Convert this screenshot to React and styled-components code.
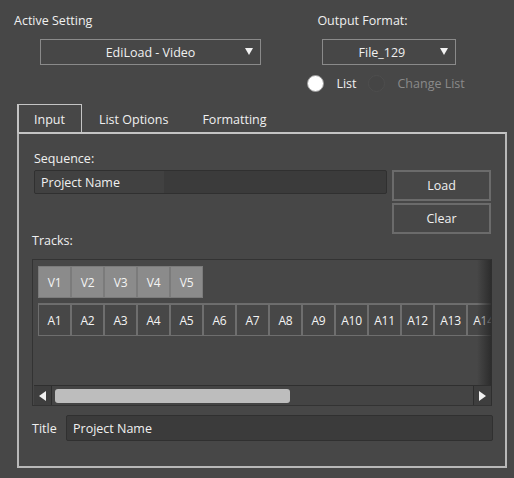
import React from "react";
import styled, { createGlobalStyle } from "styled-components";

const Global = createGlobalStyle`
  html, body { margin: 0; padding: 0; background: #474747; }
  body { font-family: "Open Sans", "Noto Sans", "Liberation Sans", sans-serif; }
  * { box-sizing: border-box; }
`;

const Window = styled.div`
  width: 514px;
  height: 478px;
  background: #474747;
  color: #f0f0f0;
  font-size: 12.5px;
  padding: 12px 7px 0 14px;
  display: flex;
  flex-direction: column;
`;

const Header = styled.div`
  display: flex;
  height: 92px;
`;

const Column = styled.div`
  display: flex;
  flex-direction: column;
  width: ${(p) => p.$width}px;
`;

const Label = styled.div`
  line-height: 18px;
  height: 18px;
  margin-left: ${(p) => p.$indent || 0}px;
`;

const Select = styled.div`
  position: relative;
  margin: 9px 0 0 ${(p) => p.$indent}px;
  width: ${(p) => p.$width}px;
  height: 26px;
  border: 1px solid #8a8a8a;
  display: flex;
  align-items: center;
  justify-content: center;
  padding-right: ${(p) => p.$shift || 0}px;
`;

const Caret = styled.span`
  position: absolute;
  right: 7px;
  top: 8px;
  width: 0;
  height: 0;
  border-left: 4.5px solid transparent;
  border-right: 4.5px solid transparent;
  border-top: 7px solid #f2f2f2;
`;

const RadioRow = styled.div`
  display: flex;
  align-items: center;
  margin: 8px 0 0 -10px;
  height: 20px;
`;

const Radio = styled.span`
  width: 17px;
  height: 17px;
  border-radius: 50%;
  margin-right: 12px;
  background: ${(p) => (p.$on ? "#ffffff" : "#454545")};
  border: 1px solid ${(p) => (p.$on ? "#9a9a9a" : "#4e4e4e")};
`;

const RadioText = styled.span`
  margin-right: 12px;
  color: ${(p) => (p.$muted ? "#8a8a8a" : "#f0f0f0")};
`;

const TabStrip = styled.div`
  display: flex;
  margin-left: 3px;
  height: 29px;
`;

const Tab = styled.div`
  padding: 0 16px 0 15px;
  line-height: 29px;
  border: 1px solid ${(p) => (p.$active ? "#c4c4c4" : "transparent")};
  border-bottom: none;
  border-left-width: 2px;
`;

const Panel = styled.div`
  margin-left: 3px;
  width: 490px;
  height: 336px;
  border: 2px solid #b8b8b8;
  border-top-color: #c4c4c4;
  margin-top: -1px;
  padding: 16px 12px 0 13px;
  display: flex;
  flex-direction: column;
`;

const SeqRow = styled.div`
  display: flex;
  margin-top: 2px;
  margin-left: 2px;
`;

const TextField = styled.div`
  width: ${(p) => p.$width}px;
  height: ${(p) => p.$height}px;
  background: #3b3b3b;
  border: 1px solid #303030;
  border-radius: 2px;
  padding-left: 6px;
  display: flex;
  align-items: center;
  position: relative;
  overflow: hidden;
`;

const Highlight = styled.span`
  position: absolute;
  left: 0;
  top: 0;
  bottom: 0;
  width: 129px;
  background: #414141;
`;

const FieldText = styled.span`
  position: relative;
`;

const ButtonStack = styled.div`
  display: flex;
  flex-direction: column;
  gap: 2px;
  margin-left: 5px;
`;

const Button = styled.div`
  width: 99px;
  height: 31px;
  border: 2px solid #6b6b6b;
  display: flex;
  align-items: center;
  justify-content: center;
`;

const TracksLabel = styled.div`
  line-height: 18px;
  margin-top: -2px;
`;

const TrackBox = styled.div`
  position: relative;
  margin-top: 9px;
  width: 460px;
  height: 147px;
  border: 1px solid #333333;
  border-right-color: #2e2e2e;
  padding: 6px 0 0 5px;
  display: flex;
  flex-direction: column;
  overflow: hidden;
`;

const TrackRow = styled.div`
  display: flex;
  margin-bottom: 5px;
  border-top: ${(p) => (p.$full ? "1px solid #6c6c6c" : "none")};
  margin-right: ${(p) => (p.$full ? "-40px" : "0")};
  align-self: flex-start;
`;

const Cell = styled.div`
  flex: none;
  width: 33px;
  height: 32px;
  border: 1px solid ${(p) => (p.$video ? "#7b7b7b" : "#6e6e6e")};
  background: ${(p) => (p.$video ? "#8b8b8b" : "#474747")};
  display: flex;
  align-items: center;
  justify-content: center;
  color: #f4f4f4;
  font-size: 12px;
  letter-spacing: -0.3px;
`;

const Fade = styled.div`
  position: absolute;
  right: 0;
  top: 0;
  bottom: 20px;
  width: 14px;
  background: linear-gradient(to right, rgba(40, 40, 40, 0), rgba(40, 40, 40, 0.85));
`;

const Spacer = styled.div`
  flex: 1;
`;

const ScrollBar = styled.div`
  display: flex;
  align-items: center;
  height: 20px;
  margin: 0 0 0 -4px;
  background: #444444;
  border-top: 1px solid #2f2f2f;
  position: relative;
`;

const ScrollArrow = styled.div`
  width: 18px;
  height: 19px;
  background: #3e3e3e;
  border-${(p) => (p.$dir === "left" ? "right" : "left")}: 1px solid #2d2d2d;
  display: flex;
  align-items: center;
  justify-content: center;
`;

const Tri = styled.span`
  width: 0;
  height: 0;
  border-top: 5px solid transparent;
  border-bottom: 5px solid transparent;
  ${(p) => (p.$dir === "left" ? "border-right: 7px solid #f0f0f0;" : "border-left: 7px solid #f0f0f0;")}
`;

const Track = styled.div`
  flex: 1;
  height: 100%;
  padding: 2px 2px;
  display: flex;
  align-items: center;
`;

const Thumb = styled.div`
  width: 235px;
  height: 14px;
  margin-left: 1px;
  border-radius: 3px;
  background: #bdbdbd;
`;

const TitleRow = styled.div`
  display: flex;
  align-items: center;
  margin-top: 9px;
`;

const TitleLabel = styled.span`
  width: 34px;
`;

const videoTracks = ["V1", "V2", "V3", "V4", "V5"];
const audioTracks = Array.from({ length: 14 }, (_, i) => `A${i + 1}`);

export default function App() {
  return (
    <>
      <Global />
      <Window>
        <Header>
          <Column $width={304}>
            <Label>Active Setting</Label>
            <Select $indent={26} $width={221}>
              EdiLoad - Video
              <Caret />
            </Select>
          </Column>
          <Column $width={190}>
            <Label>Output Format:</Label>
            <Select $indent={5} $width={134} $shift={15}>
              File_129
              <Caret />
            </Select>
            <RadioRow>
              <Radio $on />
              <RadioText>List</RadioText>
              <Radio />
              <RadioText $muted>Change List</RadioText>
            </RadioRow>
          </Column>
        </Header>

        <TabStrip>
          <Tab $active>Input</Tab>
          <Tab>List Options</Tab>
          <Tab>Formatting</Tab>
        </TabStrip>

        <Panel>
          <Label $indent={2}>Sequence:</Label>
          <SeqRow>
            <TextField $width={353} $height={24}>
              <Highlight />
              <FieldText>Project Name</FieldText>
            </TextField>
            <ButtonStack>
              <Button>Load</Button>
              <Button>Clear</Button>
            </ButtonStack>
          </SeqRow>

          <TracksLabel>Tracks:</TracksLabel>
          <TrackBox>
            <TrackRow>
              {videoTracks.map((t) => (
                <Cell key={t} $video>
                  {t}
                </Cell>
              ))}
            </TrackRow>
            <TrackRow $full>
              {audioTracks.map((t) => (
                <Cell key={t}>{t}</Cell>
              ))}
            </TrackRow>
            <Spacer />
            <ScrollBar>
              <ScrollArrow $dir="left">
                <Tri $dir="left" />
              </ScrollArrow>
              <Track>
                <Thumb />
              </Track>
              <ScrollArrow $dir="right">
                <Tri $dir="right" />
              </ScrollArrow>
            </ScrollBar>
            <Fade />
          </TrackBox>

          <TitleRow>
            <TitleLabel>Title</TitleLabel>
            <TextField $width={427} $height={26}>
              <FieldText>Project Name</FieldText>
            </TextField>
          </TitleRow>
        </Panel>
      </Window>
    </>
  );
}
